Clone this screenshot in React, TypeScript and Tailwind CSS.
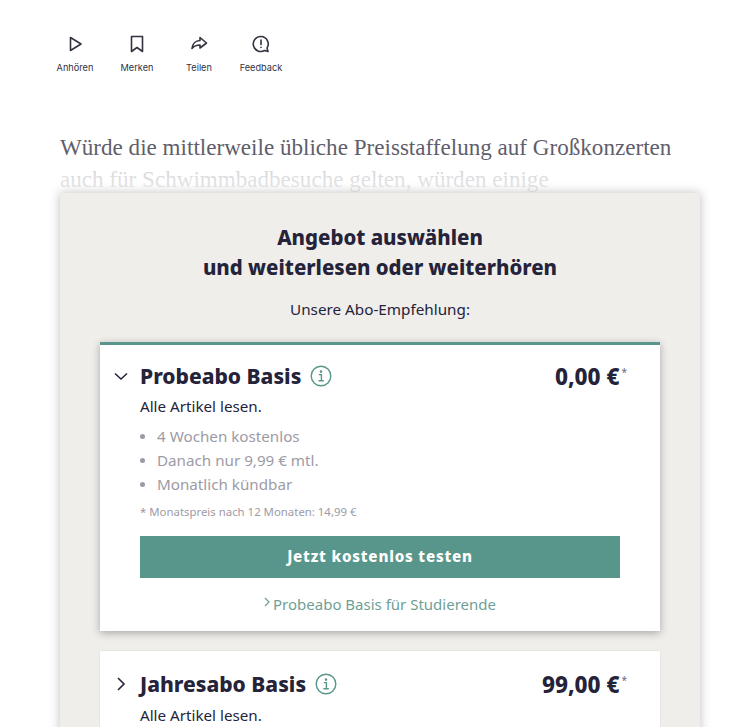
const sans = "font-['Noto_Sans',sans-serif]";

function ActionButton({ label, children }: { label: string; children: React.ReactNode }) {
  return (
    <div className="flex w-[62px] flex-col items-center">
      <svg width="24" height="24" viewBox="0 0 24 24" fill="none" stroke="#33323f" strokeWidth="1.6" strokeLinejoin="round" strokeLinecap="round">
        {children}
      </svg>
      <span className="mt-[6px] font-['Inter',sans-serif] text-[9.2px] leading-[12px] text-[#33323f]">{label}</span>
    </div>
  );
}

function InfoIcon() {
  return (
    <svg width="22" height="22" viewBox="0 0 22 22" fill="none" stroke="#58968b" strokeWidth="1.4">
      <circle cx="11" cy="11" r="9.8" />
      <path d="M8.8 9.6h2.6v6M8.4 15.8h5.4" />
      <circle cx="11" cy="6.6" r="0.6" fill="#58968b" />
    </svg>
  );
}

function OfferHeader({ name, price, open }: { name: string; price: string; open: boolean }) {
  return (
    <div className="flex items-center justify-between">
      <div className="relative flex items-center gap-[9px]">
        <svg className="absolute left-[-27px] top-[6px]" width="16" height="16" viewBox="0 0 16 16" fill="none" stroke="#25233a" strokeWidth="1.6">
          {open ? <path d="M2 5.5l6 5.5 6-5.5" /> : <path d="M5 2l6 6-6 6" />}
        </svg>
        <h3 className={`${sans} text-[21px] font-extrabold leading-[28px] text-[#25233a]`}>{name}</h3>
        <InfoIcon />
      </div>
      <div className={`${sans} mr-[-7px] flex items-start text-[22.5px] font-extrabold leading-[27px] text-[#25233a]`}>
        {price}
        <span className="ml-[2px] text-[10px] font-normal leading-[18px] text-[#6b6a78]">*</span>
      </div>
    </div>
  );
}

export default function App() {
  return (
    <main className="h-screen overflow-hidden bg-white px-[60px] pt-[32px]">
      <div className="ml-[-16px] flex">
        <ActionButton label="Anhören">
          <path d="M7.5 5.5v13L18 12z" />
        </ActionButton>
        <ActionButton label="Merken">
          <path d="M6.5 4.5h11v15L12 15.5 6.5 19.5z" />
        </ActionButton>
        <ActionButton label="Teilen">
          <path d="M13 5.5l6.5 5.5-6.5 5v-3c-3.5 0-6 1-8 3.5.5-4.5 3.5-8 8-8z" />
        </ActionButton>
        <ActionButton label="Feedback">
          <path d="M12 4.5a7.5 7.5 0 1 0 3.5 14l3.5 1-1-3.4A7.5 7.5 0 0 0 12 4.5z" />
          <path d="M12 8v4.5M12 15.2v.3" />
        </ActionButton>
      </div>

      <div className="relative mt-[57px] h-[64px] w-[632px]">
        <p className="font-['Liberation_Serif',serif] text-[23.1px] leading-[32px] text-[#5f5e6b]">
          Würde die mittlerweile übliche Preisstaffelung auf Großkonzerten auch für Schwimmbadbesuche gelten, würden einige
        </p>
        <div className="absolute inset-x-0 top-[32px] h-[32px] bg-gradient-to-b from-white/70 to-white/90" />
      </div>

      <section className="relative mt-[-2px] w-[640px] bg-[#efeeeb] px-[40px] pt-[29px] shadow-[0_0_10px_rgba(0,0,0,0.25)]">
        <h2 className={`${sans} text-center text-[20.4px] font-extrabold leading-[30px] text-[#25233a]`}>
          Angebot auswählen
          <br />
          und weiterlesen oder weiterhören
        </h2>
        <p className={`${sans} mt-[15px] text-center text-[15.25px] leading-[24px] text-[#25233a]`}>Unsere Abo-Empfehlung:</p>

        <article className="mt-[21px] border-t-[3px] border-[#58968b] bg-white px-[40px] pb-[15px] pt-[17px] shadow-[0_2px_8px_rgba(0,0,0,0.3)]">
          <OfferHeader name="Probeabo Basis" price="0,00 €" open />
          <p className={`${sans} mt-[4px] text-[15.2px] leading-[24px] text-[#25233a]`}>Alle Artikel lesen.</p>
          <ul className={`${sans} mt-[6px] text-[15.2px] leading-[24px] text-[#9c9ba5]`}>
            {["4 Wochen kostenlos", "Danach nur 9,99 € mtl.", "Monatlich kündbar"].map((item) => (
              <li key={item} className="flex items-center gap-[12px]">
                <span className="h-[5px] w-[5px] rounded-full bg-[#9c9ba5]" />
                {item}
              </li>
            ))}
          </ul>
          <p className={`${sans} mt-[8px] text-[11.4px] leading-[16px] text-[#9c9ba5]`}>* Monatspreis nach 12 Monaten: 14,99 €</p>
          <button className={`${sans} mt-[16px] h-[42px] w-full bg-[#58968b] pb-[2px] text-[15.2px] font-extrabold tracking-[0.8px] text-white`}>
            Jetzt kostenlos testen
          </button>
          <p className={`${sans} mt-[14px] flex items-center justify-center text-[15px] leading-[24px] text-[#6f9f96]`}>
            <svg className="mr-[3px] mt-[-4px]" width="6" height="10" viewBox="0 0 6 10" fill="none" stroke="#6f9f96" strokeWidth="1.2">
              <path d="M1 1l4 4-4 4" />
            </svg>
            Probeabo Basis für Studierende
          </p>
        </article>

        <article className="mt-[20px] bg-white px-[40px] pb-[20px] pt-[19px] shadow-[0_0_2px_rgba(0,0,0,0.1)]">
          <OfferHeader name="Jahresabo Basis" price="99,00 €" open={false} />
          <p className={`${sans} mt-[5px] text-[15.2px] leading-[24px] text-[#25233a]`}>Alle Artikel lesen.</p>
        </article>
      </section>
    </main>
  );
}
